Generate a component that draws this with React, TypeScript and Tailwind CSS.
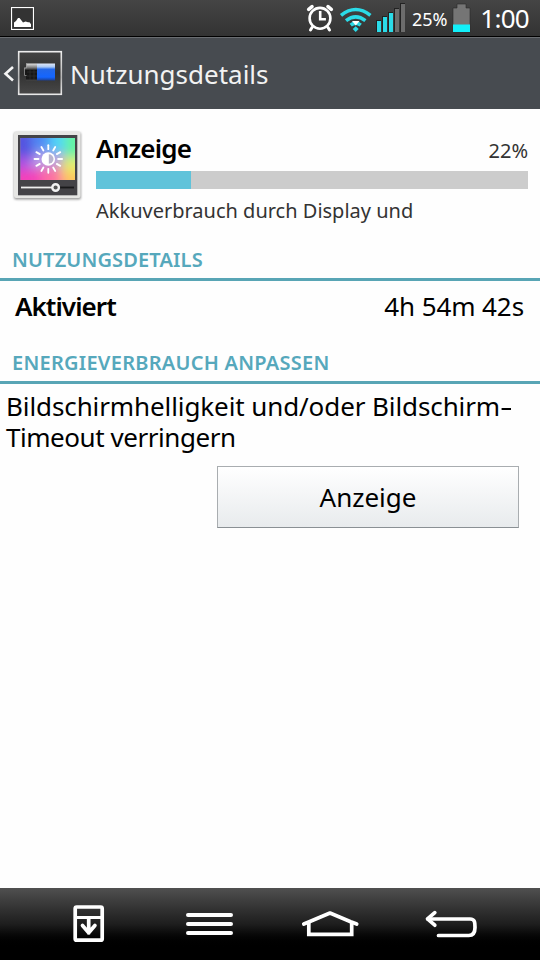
import type { ReactNode } from "react";

function Label({ className, children }: { className: string; children: ReactNode }) {
  return <span className={`block whitespace-nowrap ${className}`}>{children}</span>;
}

function PictureIcon() {
  return (
    <svg className="ml-[11px] mt-[7px] h-[23px] w-[23px]" viewBox="0 0 23 23">
      <rect x="0.5" y="0.5" width="22" height="22" fill="#333" stroke="#fff" strokeWidth="1.2" />
      <path d="M3 20v-4.500l2-1.500 2-3h1.500l2 2.500 1.500 2 2.500-1 2.500.7h1.500l1.500 2v2.800z" fill="#fff" />
    </svg>
  );
}

function StatusIcons() {
  return (
    <svg className="h-9 w-[104px]" viewBox="304 0 104 36">
      <g stroke="#fff" fill="none" strokeWidth="2.6" strokeLinecap="round">
        <circle cx="320" cy="18.300" r="10.400" />
        <path d="M320.200 11v8.300h5.700" strokeLinecap="butt" />
        <path d="M308.700 9.300l3.300-2.600M328 6.700l3.300 2.600" strokeWidth="3.600" />
        <path d="M312 27.500l-1.500 2.500M328 27.500l1.500 2.500" strokeWidth="3" />
      </g>
      <g fill="none" stroke="#2bdbe8" strokeWidth="3.600">
        <path d="M341 15.400q14.700-11.800 29.400 0" />
        <path d="M346 20.600q9.700-7.600 19.400 0" />
        <path d="M350.700 25.200q5-4 10 0" />
      </g>
      <path d="M352 21h7.500l-3.700 4.500z" fill="#fff" />
      <path d="M352.700 29l3-2.700 3 2.700-3 3z" fill="#2bdbe8" />
      <g fill="#222">
        <path d="M376 20h5v12h-5zM382 16h5v16h-5zM388 12h5v20h-5zM394 8h5v24h-5zM400 3h5v29h-5z" />
      </g>
      <path d="M377 21h4v11h-4zM383 17h4v15h-4zM389 13h4v19h-4z" fill="#2bdbe8" />
      <path d="M395 9h4v23h-4zM401 4h4v28h-4z" fill="#6c6c6c" />
    </svg>
  );
}

function BatteryStatus() {
  return (
    <svg className="h-9 w-6" viewBox="450 0 24 36">
      <path d="M453 8h4V4h9v4h4v24h-17z" fill="#757575" stroke="#2a2a2a" strokeWidth="0.600" />
      <rect x="453" y="24.500" width="17" height="7.500" fill="#12f0fa" />
    </svg>
  );
}

function BatteryAppIcon() {
  return (
    <svg className="mt-px h-[60px] w-[70px]" viewBox="0 44 70 60">
      <defs>
        <linearGradient id="cell" x1="0" y1="0" x2="0" y2="1">
          <stop offset="0" stopColor="#dfe8f8" />
          <stop offset="0.200" stopColor="#a9c8f5" />
          <stop offset="0.340" stopColor="#2468e8" />
          <stop offset="0.800" stopColor="#1465ff" />
          <stop offset="1" stopColor="#1c3f90" />
        </linearGradient>
        <linearGradient id="shell" x1="0" y1="0" x2="0" y2="1">
          <stop offset="0" stopColor="#e2e2e2" />
          <stop offset="0.250" stopColor="#777" />
          <stop offset="0.400" stopColor="#151515" />
          <stop offset="0.900" stopColor="#191919" />
          <stop offset="1" stopColor="#444" />
        </linearGradient>
        <linearGradient id="frame" x1="0" y1="0" x2="0" y2="1">
          <stop offset="0" stopColor="#eee" />
          <stop offset="0.600" stopColor="#b5b5b5" />
          <stop offset="1" stopColor="#e8e8e8" />
        </linearGradient>
        <linearGradient id="tile" x1="0" y1="0" x2="0" y2="1">
          <stop offset="0" stopColor="#444" />
          <stop offset="0.500" stopColor="#303030" />
          <stop offset="1" stopColor="#484848" />
        </linearGradient>
      </defs>
      <path d="M13 67l-7.500 6.700 7.500 6.800" fill="none" stroke="#f4f4f4" strokeWidth="2.600" />
      <rect x="18.700" y="51.700" width="42.600" height="42.600" fill="url(#tile)" stroke="url(#frame)" strokeWidth="1.600" />
      <path d="M26 63.500h11v17H26v-4.500h-2V67.500h2z" fill="url(#shell)" />
      <path d="M26.500 63.500v4.500h-2v7.500h2" fill="none" stroke="#999" strokeWidth="0.800" />
      <path d="M30 69v11M34 69v11M27 72h10M27 76h10" stroke="#383838" strokeWidth="0.600" />
      <rect x="37" y="63.500" width="18" height="17" fill="url(#cell)" />
    </svg>
  );
}

function DisplayIcon() {
  return (
    <svg className="h-[72px] w-[84px]" viewBox="0 130 84 72">
      <defs>
        <filter id="soft" x="-50%" y="-50%" width="200%" height="200%">
          <feGaussianBlur stdDeviation="5.500" />
        </filter>
        <filter id="shadow" x="-20%" y="-20%" width="140%" height="140%">
          <feGaussianBlur stdDeviation="0.900" />
        </filter>
        <clipPath id="screen">
          <rect x="20.500" y="138" width="54.500" height="42" />
        </clipPath>
      </defs>
      <rect x="14" y="132.500" width="67" height="67" rx="2" fill="#999" filter="url(#shadow)" />
      <rect x="14" y="131.500" width="66.500" height="66.500" rx="2" fill="#e6e6e4" />
      <rect x="18" y="135" width="59.300" height="60.300" fill="#444347" />
      <g clipPath="url(#screen)">
        <rect x="20" y="138" width="55" height="42" fill="#b7a0e8" />
        <g filter="url(#soft)">
          <rect x="10" y="128" width="24" height="30" fill="#5553e0" />
          <rect x="32" y="128" width="18" height="22" fill="#4d8af4" />
          <rect x="50" y="128" width="16" height="24" fill="#4fd5f8" />
          <rect x="65" y="128" width="20" height="32" fill="#65f5a0" />
          <rect x="62" y="158" width="24" height="16" fill="#e5ee6c" />
          <rect x="60" y="172" width="26" height="18" fill="#ffc45c" />
          <rect x="40" y="168" width="22" height="22" fill="#ff70a0" />
          <rect x="8" y="170" width="34" height="20" fill="#f640b8" />
          <rect x="8" y="157" width="22" height="14" fill="#b050e0" />
        </g>
      </g>
      <g stroke="#fff" strokeWidth="1.800" strokeLinecap="round">
        {Array.from({ length: 12 }, (_, i) => (
          <path key={i} d="M48.300 149.200v-4" transform={`rotate(${i * 30} 48.300 159)`} />
        ))}
      </g>
      <circle cx="48.300" cy="159" r="6.800" fill="#fff" />
      <path d="M48.800 154.300a4.700 4.700 0 0 1 0 9.400z" fill="#b9b3cf" />
      <path d="M21 187.500h31" stroke="#eee" strokeWidth="1.800" />
      <path d="M59 187.500h15" stroke="#19191b" strokeWidth="1.800" />
      <circle cx="55.600" cy="187.500" r="3.300" fill="#555" stroke="#f2f2f2" strokeWidth="2.400" />
    </svg>
  );
}

function SectionTitle({ className, children }: { className: string; children: ReactNode }) {
  return (
    <div className="flex h-[43px] items-end border-b-[3px] border-[#58a5b5] pb-1 pl-3">
      <Label className={`text-[20px] font-semibold leading-7 text-[#56a8bc] ${className}`}>{children}</Label>
    </div>
  );
}

function NavigationBar() {
  return (
    <nav className="mt-auto h-[72px] bg-linear-to-b from-[#505050] via-[#1e1e1e] via-50% to-black to-85%">
      <svg className="h-[72px] w-[540px]" viewBox="0 888 540 72" fill="none" stroke="#fff" strokeWidth="3.700">
        <rect x="75.200" y="907" width="27" height="33.200" rx="1.500" />
        <path d="M75 917.500h27" strokeWidth="3" />
        <path d="M88.700 918v15M82.500 925.500l6.200 7.300 6.200-7.300" strokeLinejoin="round" strokeLinecap="round" />
        <path d="M188 915h43M188 924h43M188 933h43" strokeWidth="4" strokeLinecap="round" />
        <path d="M303.800 924l5.500-2.300 20.700-8.700 20.700 8.700 6 2.300" strokeLinecap="round" strokeLinejoin="round" />
        <path d="M308.800 922v12.300h42.900V922" />
        <path d="M428 919h42c5 0 5 3.500 5 8.500s-1.500 8-6.200 8H438.500" strokeLinecap="round" />
        <path d="M434.800 912.700l-7.300 6.200 7.300 6.300" strokeLinecap="round" strokeLinejoin="round" />
      </svg>
    </nav>
  );
}

export default function App() {
  return (
    <div className="flex h-[960px] w-[540px] flex-col overflow-hidden bg-[#fefefe] font-['Noto_Sans',sans-serif] text-black">
      <div className="flex h-9 shrink-0 bg-linear-to-b from-[#454545] to-[#333] text-white">
        <PictureIcon />
        <div className="ml-auto flex items-start">
          <StatusIcons />
          <Label className="w-[42px] pl-1 text-[18px] leading-[38px]">25%</Label>
          <BatteryStatus />
          <Label className="w-[66px] pr-[11px] text-right text-[26px] leading-[37px] tracking-[-0.7px]">1:00</Label>
        </div>
      </div>
      <div className="flex h-[73px] shrink-0 items-center border-t border-black bg-[#474b50] text-[#f2f2f2] shadow-[inset_0_1px_0_#6a6d71]">
        <BatteryAppIcon />
        <Label className="pt-[2px] text-[26px] leading-9">Nutzungsdetails</Label>
      </div>
      <div className="flex h-[129px] pr-3">
        <div className="w-24 pt-[21px]">
          <DisplayIcon />
        </div>
        <div className="flex-1 pt-6">
          <div className="flex h-[38px] justify-between">
            <Label className="text-[26px] font-semibold leading-[31px] tracking-[-0.8px]">Anzeige</Label>
            <Label className="pt-[3px] text-[20px] leading-[30px] text-[#333]">22%</Label>
          </div>
          <div className="h-[18px] bg-[#ccc]">
            <div className="h-full w-[22%] bg-[#60c3da]" />
          </div>
          <Label className="mt-2 text-[20px] leading-7 text-[#333]">Akkuverbrauch durch Display und</Label>
        </div>
      </div>
      <SectionTitle className="tracking-[0.15px]">NUTZUNGSDETAILS</SectionTitle>
      <div className="flex h-[60px] justify-between pr-4 pl-[15px] leading-[51px]">
        <Label className="text-[26px] font-semibold tracking-[-0.95px]">Aktiviert</Label>
        <Label className="text-[26px] tracking-[-0.1px]">4h 54m 42s</Label>
      </div>
      <SectionTitle className="tracking-[0.25px]">ENERGIEVERBRAUCH ANPASSEN</SectionTitle>
      <div className="mt-[7px] pl-[6px] text-[26px] leading-[31px]">
        <Label className="tracking-[-0.1px]">
          Bildschirmhelligkeit und/oder Bildschirm
          <span className="inline-block origin-left scale-x-150">-</span>
        </Label>
        <Label className="tracking-[-0.45px]">Timeout verringern</Label>
      </div>
      <button className="mt-[13px] ml-[217px] h-[62px] w-[302px] border border-[#a9adb0] border-b-[#8a9094] bg-linear-to-b from-white to-[#e8ebed] text-[26px]">
        Anzeige
      </button>
      <NavigationBar />
    </div>
  );
}
